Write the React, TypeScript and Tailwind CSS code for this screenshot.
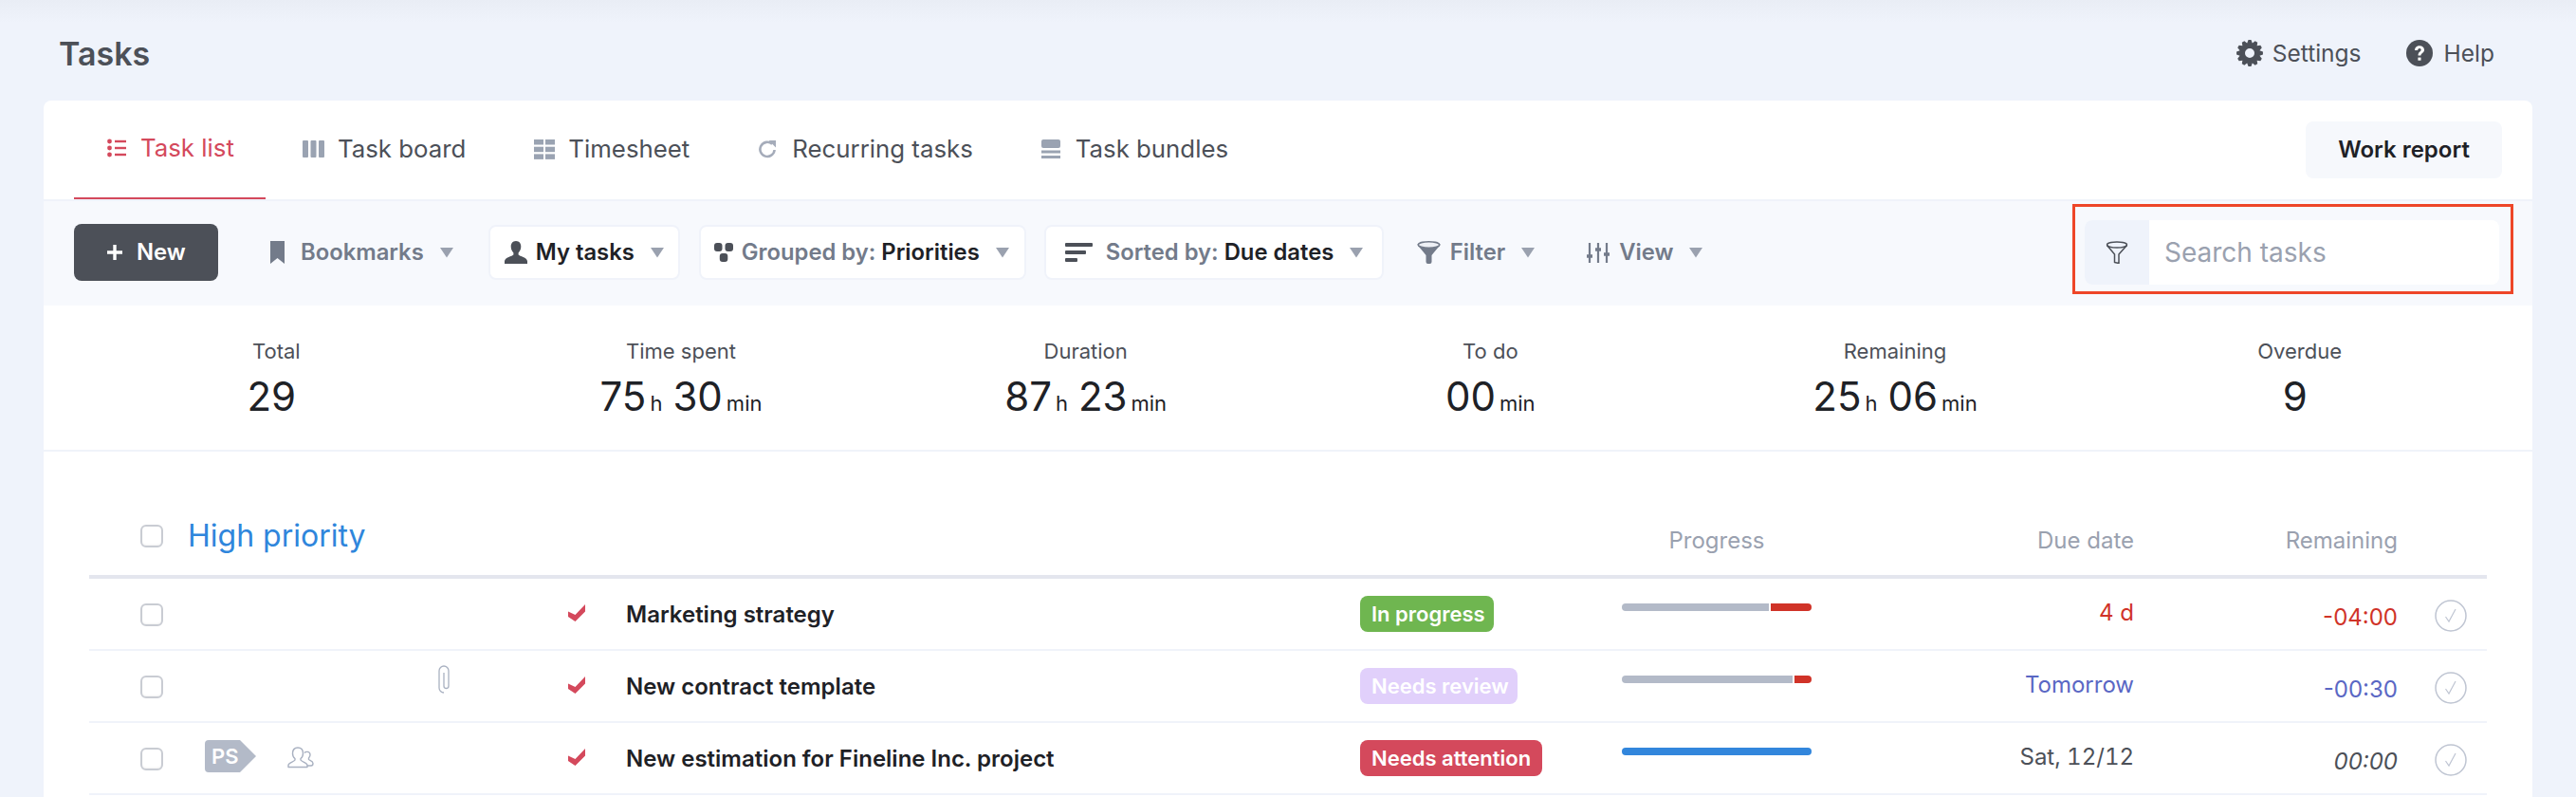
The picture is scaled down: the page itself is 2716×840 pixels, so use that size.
import React from "react";

const Caret = () => (
  <svg width="16" height="12" viewBox="0 0 16 12" className="shrink-0"><path d="M1 1h14L8 11.5z" fill="#9aa1af" /></svg>
);

const gearPath = (() => {
  const teeth = 12;
  const pts: string[] = [];
  for (let i = 0; i < teeth; i++) {
    const step = (Math.PI * 2) / teeth;
    const a = i * step;
    const seq: [number, number][] = [
      [10.8, a - step * 0.5],
      [14, a - step * 0.2],
      [14, a + step * 0.2],
    ];
    for (const [r, t] of seq) pts.push(`${(14 + r * Math.cos(t)).toFixed(2)} ${(14 + r * Math.sin(t)).toFixed(2)}`);
  }
  return `M${pts.join("L")}ZM14 9a5 5 0 1 0 0 10a5 5 0 1 0 0-10Z`;
})();

const tabs = ["Task list", "Task board", "Timesheet", "Recurring tasks", "Task bundles"];

function TabIcon({ name }: { name: string }) {
  const c = "#9aa3b2";
  if (name === "Task list")
    return (
      <svg width="20" height="20" viewBox="0 0 20 20" fill="#d4495c">
        <circle cx="2.5" cy="3" r="2.4" /><circle cx="2.5" cy="10" r="2.4" /><circle cx="2.5" cy="17" r="2.4" />
        <rect x="8" y="1.8" width="12" height="2.4" /><rect x="8" y="8.8" width="12" height="2.4" /><rect x="8" y="15.8" width="12" height="2.4" />
      </svg>
    );
  if (name === "Task board")
    return (
      <svg width="23" height="18" viewBox="0 0 23 18" fill={c}>
        <rect x="0" width="6" height="18" rx="1" /><rect x="8.5" width="6" height="18" rx="1" /><rect x="17" width="6" height="18" rx="1" />
      </svg>
    );
  if (name === "Timesheet")
    return (
      <svg width="22" height="21" viewBox="0 0 22 21" fill={c}>
        <rect width="10" height="5.5" /><rect x="12" width="10" height="5.5" />
        <rect y="7.7" width="10" height="5.5" /><rect x="12" y="7.7" width="10" height="5.5" />
        <rect y="15.4" width="10" height="5.5" /><rect x="12" y="15.4" width="10" height="5.5" />
      </svg>
    );
  if (name === "Recurring tasks")
    return (
      <svg width="20" height="20" viewBox="0 0 20 20" fill="none" stroke="#a5acba" strokeWidth="2.6">
        <path d="M15.2 4.8A7.6 7.6 0 1 0 17.6 11" />
        <path d="M11.5 1h7.5v7.500z" fill="#a5acba" stroke="none" />
      </svg>
    );
  return (
    <svg width="20" height="20" viewBox="0 0 20 20" fill={c}>
      <rect width="20" height="9" rx="2" /><rect y="11.5" width="20" height="3" /><rect y="17" width="20" height="3" />
    </svg>
  );
}

const PillBtn = ({ children }: { children: React.ReactNode }) => (
  <div className="flex h-[58px] items-center rounded-[8px] border-2 border-[#f0f3fa] bg-white">{children}</div>
);

const stats: { label: string; parts: [string, string?][] }[] = [
  { label: "Total", parts: [["29"]] },
  { label: "Time spent", parts: [["75", "h"], ["30", "min"]] },
  { label: "Duration", parts: [["87", "h"], ["23", "min"]] },
  { label: "To do", parts: [["00", "min"]] },
  { label: "Remaining", parts: [["25", "h"], ["06", "min"]] },
  { label: "Overdue", parts: [["9"]] },
];

const Checkbox = () => (
  <div className="h-[24px] w-[24px] rounded-[6px] border-2 border-[#c9ccd3] bg-white shadow-[inset_0_-1px_2px_rgba(0,0,0,0.05)]" />
);

const rowGrid = "grid grid-cols-[68px_87px_159px_137px_61px_774px_276px_200px_340px_278px_39px_34px] pl-[54px] pr-[21px] items-center";

type Row = {
  title: string;
  status: string;
  statusCls: string;
  statusW: string;
  bar: React.ReactNode;
  due: string;
  dueCls: string;
  rem: string;
  remCls: string;
  clip?: boolean;
  tag?: boolean;
};

const rows: Row[] = [
  {
    title: "Marketing strategy",
    status: "In progress",
    statusCls: "bg-[#6fb650]",
    statusW: "w-[141px]",
    bar: (
      <>
        <div className="h-full w-[155px] rounded-l-[4px] bg-[#b3bac8]" />
        <div className="ml-[2px] h-full w-[43px] rounded-r-[4px] bg-[#d03328]" />
      </>
    ),
    due: "4 d",
    dueCls: "text-[#d03328]",
    rem: "-04:00",
    remCls: "text-[#d03328]",
  },
  {
    title: "New contract template",
    status: "Needs review",
    statusCls: "bg-[#e1d0fb]",
    statusW: "w-[166px]",
    bar: (
      <>
        <div className="h-full w-[180px] rounded-l-[4px] bg-[#b3bac8]" />
        <div className="ml-[2px] h-full w-[18px] rounded-r-[4px] bg-[#d03328]" />
      </>
    ),
    due: "Tomorrow",
    dueCls: "text-[#5a67c4]",
    rem: "-00:30",
    remCls: "text-[#5a67c4]",
    clip: true,
  },
  {
    title: "New estimation for Fineline Inc. project",
    status: "Needs attention",
    statusCls: "bg-[#d4495c]",
    statusW: "w-[192px]",
    bar: <div className="h-full w-full rounded-[4px] bg-[#3286dc]" />,
    due: "Sat, 12/12",
    dueCls: "text-[#4c5058] tabular-nums",
    rem: "00:00",
    remCls: "text-[#4c5058] italic",
    tag: true,
  },
];

export default function App() {
  return (
    <div className="flex h-[840px] flex-col overflow-hidden bg-[linear-gradient(#e9edf5_0px,#eff3fb_24px)] font-['Inter',sans-serif] text-[#4c5058]">
      <header className="flex h-[106px] shrink-0 items-center pl-[62px] pr-[86px] pt-[6px]">
        <h1 className="text-[34px] font-semibold">Tasks</h1>
        <div className="ml-auto flex items-center text-[24.5px]">
          <svg width="28" height="28" viewBox="0 0 28 28" fill="#4c5058">
            <path fillRule="evenodd" d={gearPath} />
          </svg>
          <span className="ml-[10px]">Settings</span>
          <svg className="ml-[47px]" width="28" height="28" viewBox="0 0 28 28">
            <circle cx="14" cy="14" r="14" fill="#4c5058" />
            <path d="M9 11c0-3 2.200-4.800 5.100-4.800 2.800 0 4.900 1.700 4.900 4.200 0 3.400-3.600 3.500-3.600 6.200H12.500c0-4 3.200-4.200 3.200-6 0-.9-.7-1.500-1.700-1.500-1.100 0-1.800.8-1.900 1.900z" fill="#fff" />
            <rect x="12.400" y="18.600" width="3.100" height="3.100" fill="#fff" />
          </svg>
          <span className="ml-[12px]">Help</span>
        </div>
      </header>

      <main className="mx-[46px] flex-1 overflow-hidden rounded-t-[8px] bg-white">
        <nav className="flex h-[106px] items-center border-b-2 border-[#f0f3fa] pl-[32px] pr-[32px] text-[25.8px]">
          {tabs.map((t, i) => (
            <div
              key={t}
              className={
                i === 0
                  ? "flex h-full w-[202px] items-center gap-[15px] border-b-2 border-[#d4495c] pb-[2px] pl-[35px] text-[#d4495c]"
                  : i === 1
                    ? "ml-[39px] flex items-center gap-[14px] pb-[2px]"
                    : i === 2
                      ? "ml-[72px] flex items-center gap-[14px] pb-[2px]"
                      : "ml-[72px] flex items-center gap-[16px] pb-[2px]"
              }
            >
              <TabIcon name={t} />
              <span>{t}</span>
            </div>
          ))}
          <button className="ml-auto h-[60px] w-[207px] rounded-[8px] bg-[#f6f8fc] text-[24px] font-semibold text-[#1e2126]">
            Work report
          </button>
        </nav>

        <section className="flex h-[110px] items-center bg-[#f7f9fd] pb-[2px] pl-[32px] pr-[20px] text-[23.8px] font-semibold text-[#737b8a]">
          <button className="flex h-[60px] w-[152px] items-center gap-[15px] rounded-[8px] bg-[#4c5058] pl-[35px] text-white">
            <svg width="16" height="16" viewBox="0 0 16 16" fill="#fff"><path d="M6.300 0h3.400v6.300H16v3.400H9.700V16H6.300V9.700H0V6.300h6.300z" /></svg>
            <span>New</span>
          </button>

          <div className="ml-[55px] flex items-center">
            <svg width="15" height="24" viewBox="0 0 15 24" fill="#737b8a"><path d="M0 0h15v24l-7.500-6L0 24z" /></svg>
            <span className="ml-[17px]">Bookmarks</span>
            <span className="ml-[16px]"><Caret /></span>
          </div>

          <div className="ml-[36px]">
            <PillBtn>
              <div className="flex w-[198px] items-center pl-[15px]">
                <svg width="24" height="24" viewBox="0 0 24 24" fill="#4c5058"><path d="M12 0c3.300 0 5.300 2.400 5.300 5.800 0 3-1.100 5.100-2.700 6.600v2.200c1.200 1.500 9.400 3 9.400 6.700V24H0v-2.700c0-3.700 8.200-5.200 9.400-6.700v-2.200C7.800 10.900 6.700 8.800 6.700 5.800 6.700 2.400 8.700 0 12 0z" /></svg>
                <span className="ml-[9px] text-[#1e2126]">My tasks</span>
                <span className="ml-[16px]"><Caret /></span>
              </div>
            </PillBtn>
          </div>

          <div className="ml-[20px]">
            <PillBtn>
              <div className="flex w-[341px] items-center pl-[14px]">
                <svg width="20" height="20" viewBox="0 0 20 20" fill="#4c5058">
                  <rect width="8.500" height="9" rx="3" /><rect x="11.500" width="8.500" height="9" rx="3" /><rect x="5.800" y="11" width="8.500" height="9" rx="3" />
                </svg>
                <span className="ml-[9px]">Grouped by: <span className="text-[#1e2126]">Priorities</span></span>
                <span className="ml-[16px]"><Caret /></span>
              </div>
            </PillBtn>
          </div>

          <div className="ml-[19px]">
            <PillBtn>
              <div className="flex w-[354px] items-center pl-[20px]">
                <svg width="29" height="20" viewBox="0 0 29 20" fill="#4c5058">
                  <rect width="29" height="4" rx="1" /><rect y="8" width="22" height="4" rx="1" /><rect y="16" width="13" height="4" rx="1" />
                </svg>
                <span className="ml-[14px]">Sorted by: <span className="text-[#1e2126]">Due dates</span></span>
                <span className="ml-[16px]"><Caret /></span>
              </div>
            </PillBtn>
          </div>

          <div className="ml-[35px] flex items-center">
            <svg width="25" height="24" viewBox="0 0 25 24">
              <path d="M0 3.500h25L15.500 15v7a2 2 0 0 1-2 2h-2a2 2 0 0 1-2-2V15z" fill="#737b8a" />
              <ellipse cx="12.500" cy="4" rx="11.200" ry="3.200" fill="#eef0f5" stroke="#737b8a" strokeWidth="1.500" />
            </svg>
            <span className="ml-[10px]">Filter</span>
            <span className="ml-[16px]"><Caret /></span>
          </div>

          <div className="ml-[54px] flex items-center">
            <svg width="24" height="21" viewBox="0 0 24 21" fill="none" stroke="#737b8a" strokeWidth="2.200">
              <path d="M3 0v21M12 0v21M21 0v21" />
              <path d="M0 14h6M9 7h6M18 12h6" strokeWidth="3.500" />
            </svg>
            <span className="ml-[10px]">View</span>
            <span className="ml-[16px]"><Caret /></span>
          </div>

          <div className="ml-auto mt-[3px] flex h-[95px] w-[465px] items-start self-start border-[3px] border-[#ee4628] pl-[10px] pr-[12px] pt-[14px]">
            <div className="flex h-[68px] w-full overflow-hidden rounded-[8px] bg-white">
              <div className="flex w-[68px] items-center justify-center bg-[#eff3fb]">
                <svg width="24" height="24" viewBox="0 0 24 24" fill="none" stroke="#4c5058" strokeWidth="1.500" strokeLinejoin="round">
                  <ellipse cx="12" cy="4" rx="10.500" ry="3" />
                  <path d="M1.500 4.500 9.500 14v8.500l4.500 1V14l8.500-9.500" />
                </svg>
              </div>
              <span className="ml-[16px] self-center text-[28px] font-normal leading-[34px] text-[#9aa1af]">Search tasks</span>
            </div>
          </div>
        </section>

        <section className="grid h-[154px] grid-cols-6 border-b-2 border-[#f0f3fa] px-[32px] pt-[33px]">
          {stats.map((s) => (
            <div key={s.label} className="flex flex-col items-center">
              <div className="text-[22px] leading-[30px]">{s.label}</div>
              <div className={"mt-[9px] flex items-baseline gap-[11px] text-[#1e2126] " + (s.parts[0][1] ? "" : "pr-[10px]")}>
                {s.parts.map(([v, u], i) => (
                  <span key={i} className="flex items-baseline gap-[4px]">
                    <span className="text-[42px] leading-[48px]">{v}</span>
                    {u && <span className="text-[22px]">{u}</span>}
                  </span>
                ))}
              </div>
            </div>
          ))}
        </section>

        <section className="mx-[48px]">
          <div className={rowGrid + " h-[134px] border-b-4 border-[#e4e6ee]"}>
            <div className="col-start-1 mt-[48px]"><Checkbox /></div>
            <div className="col-start-2 col-span-5 ml-[-18px] mt-[48px] text-[32px] text-[#2f86dc]">High priority</div>
            <div className="col-start-8 mt-[58px] text-center text-[24px] text-[#9aa1af]">Progress</div>
            <div className="col-start-9 mt-[58px] text-right text-[24px] text-[#9aa1af]">Due date</div>
            <div className="col-start-10 mt-[58px] text-right text-[24px] text-[#9aa1af]">Remaining</div>
          </div>
          {rows.map((r) => (
            <div key={r.title} className={rowGrid + " h-[76px] border-b-2 border-[#f0f3fa]"}>
              <div className="col-start-1 mt-[2px]"><Checkbox /></div>
              <div className="col-start-2">
                {r.tag && (
                  <div className="relative mt-[-4px] flex h-[34px] w-[54px] items-center pl-[7px] text-[22px] font-semibold text-white">
                    <svg className="absolute inset-0" width="54" height="34" viewBox="0 0 54 34"><path d="M4 0h33l17 17-17 17H4a4 4 0 0 1-4-4V4a4 4 0 0 1 4-4z" fill="#b3bac8" /></svg>
                    <span className="relative">PS</span>
                  </div>
                )}
              </div>
              <div className="col-start-3">
                {r.tag && (
                  <svg className="mt-[-2px]" width="28" height="23" viewBox="0 0 28 23" fill="none" stroke="#a9b1c1" strokeWidth="1.400" strokeLinejoin="round">
                    <path d="M11 1c3.500 0 5.500 2.500 5.500 6 0 2.500-1 4.500-2.500 5.500V14c1 2 7 2.500 7 5.500v2H1v-2c0-3 6-3.500 7-5.500v-1.500C6.500 11.500 5.500 9.500 5.500 7c0-3.500 2-6 5.500-6z" />
                    <path d="M18 6.500c1-1.500 5.500-2 6 1.500.3 2-.5 3-1.500 4v1.500c.5 1 4.500 1.500 4.500 4 0 1.500-1 2.500-2 2.500h-4" />
                  </svg>
                )}
              </div>
              <div className="col-start-4">
                {r.clip && (
                  <svg className="mt-[-14px]" width="12" height="30" viewBox="0 0 12 30" fill="none" stroke="#a9b1c1" strokeWidth="1.300">
                    <path d="M6 8v14a2.500 2.500 0 0 0 5 0V6a5 5 0 0 0-10 0v18a5 5 0 0 0 5 5" />
                  </svg>
                )}
              </div>
              <div className="col-start-5">
                <svg className="mt-[-2px]" width="18" height="18" viewBox="0 0 18 18" fill="#d4495c"><path d="M0 7.500 7.500 11 18 0v7.500L7.500 18 0 13z" /></svg>
              </div>
              <div className="col-start-6 mt-[2px] text-[24px] font-semibold text-[#1e2126]">{r.title}</div>
              <div className={"col-start-7 flex h-[38px] items-center rounded-[8px] pl-[12px] text-[22px] font-semibold text-white " + r.statusW + " " + r.statusCls}>
                {r.status}
              </div>
              <div className="col-start-8 mt-[-15px] flex h-[8px] w-[200px]">{r.bar}</div>
              <div className={"col-start-9 mt-[-2px] text-right text-[24px] " + r.dueCls}>{r.due}</div>
              <div className={"col-start-10 mt-[7px] text-right text-[24px] " + r.remCls}>{r.rem}</div>
              <div className="col-start-12 mt-[3px]">
                <svg width="34" height="34" viewBox="0 0 34 34" fill="none" stroke="#bfc5d2" strokeWidth="1.500">
                  <circle cx="17" cy="17" r="16" />
                  <path d="M11.500 18 15 23 22 10" strokeWidth="1.200" />
                </svg>
              </div>
            </div>
          ))}
        </section>
      </main>
    </div>
  );
}
